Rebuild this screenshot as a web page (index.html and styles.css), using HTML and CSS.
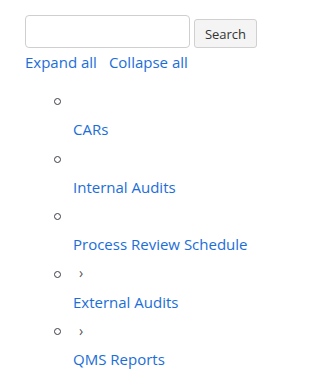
FILE: index.html
```html
<!DOCTYPE html>
<html lang="en">
<head>
<meta charset="utf-8">
<title>Tree</title>
<link rel="stylesheet" href="styles.css">
</head>
<body>
<div class="page">
  <form class="search-row" onsubmit="return false">
    <input class="search-input" type="text" aria-label="Search">
    <button class="search-btn" type="submit">Search</button>
  </form>
  <div class="actions">
    <a href="#" class="action-link">Expand all</a>
    <a href="#" class="action-link">Collapse all</a>
  </div>
  <ul class="tree">
    <li class="node">
      <div class="node-head"><span class="bullet"></span></div>
      <a href="#" class="node-link">CARs</a>
    </li>
    <li class="node">
      <div class="node-head"><span class="bullet"></span></div>
      <a href="#" class="node-link">Internal Audits</a>
    </li>
    <li class="node">
      <div class="node-head"><span class="bullet"></span></div>
      <a href="#" class="node-link">Process Review Schedule</a>
    </li>
    <li class="node">
      <div class="node-head"><span class="bullet"></span><span class="toggle">›</span></div>
      <a href="#" class="node-link">External Audits</a>
    </li>
    <li class="node">
      <div class="node-head"><span class="bullet"></span><span class="toggle">›</span></div>
      <a href="#" class="node-link">QMS Reports</a>
    </li>
  </ul>
</div>
</body>
</html>
```
FILE: styles.css
```css
html, body {
  margin: 0;
  padding: 0;
  background: #ffffff;
}

body {
  font-family: "Open Sans", "Noto Sans", "Liberation Sans", sans-serif;
  font-size: 15px;
  color: #212529;
}

.page {
  padding: 15px 25px 0 25px;
}

.search-row {
  display: flex;
  align-items: flex-end;
  gap: 4px;
  margin: 0;
}

.search-input {
  box-sizing: border-box;
  width: 165px;
  height: 33px;
  border: 1px solid #cfcfcf;
  border-radius: 4px;
  padding: 4px 8px;
  margin: 0;
  font: inherit;
  background: #fff;
}

.search-btn {
  box-sizing: border-box;
  width: 63px;
  height: 29px;
  margin: 0;
  padding: 0;
  border: 1px solid #d0d0d0;
  border-radius: 3px;
  background: #f4f4f4;
  color: #333;
  font-family: "Open Sans", "Noto Sans", sans-serif;
  font-size: 13px;
}

.actions {
  display: flex;
  gap: 12px;
  line-height: 24px;
  margin-top: 2px;
}

.action-link,
.node-link {
  color: #1b6ed8;
  text-decoration: none;
}

.tree {
  list-style: none;
  margin: 13px 0 0 0;
  padding: 0 0 0 48px;
}

.node {
  height: 57.6px;
}

.node-head {
  display: flex;
  align-items: center;
  height: 29px;
  margin-bottom: 1px;
}

.bullet {
  box-sizing: border-box;
  width: 7px;
  height: 7px;
  border: 1.3px solid #3c3c48;
  border-radius: 50%;
  margin-left: -19px;
}

.toggle {
  margin-left: 18px;
  margin-top: -2px;
  color: #555;
  font-size: 14px;
  line-height: 1;
}

.node-link {
  display: block;
  line-height: 24px;
}
```
